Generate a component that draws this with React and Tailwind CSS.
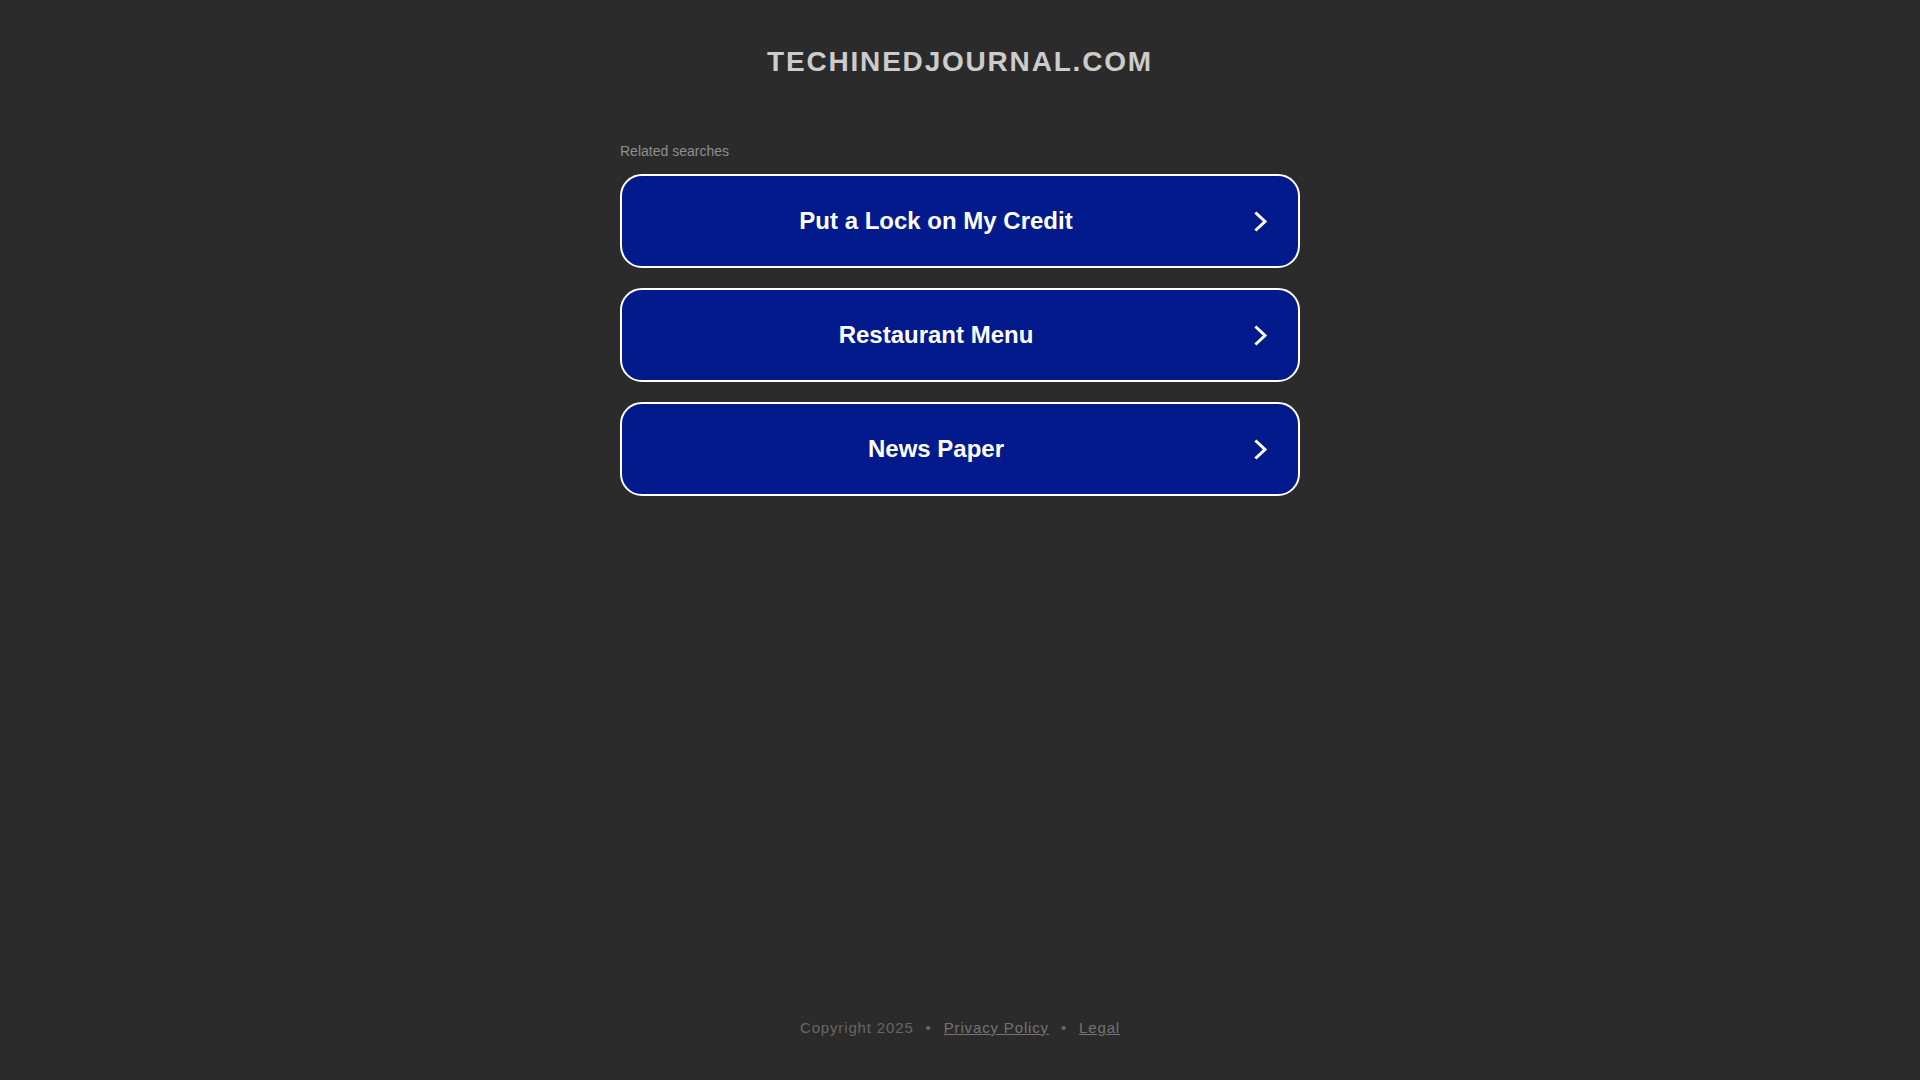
import React from 'react';

const searches = ['Put a Lock on My Credit', 'Restaurant Menu', 'News Paper'];

const Chevron = () => (
  <svg width="24" height="24" viewBox="0 0 24 24" fill="none" className="shrink-0">
    <path d="M7.5 4.5 L16 12.5 L7.5 20.5" stroke="#ffffff" strokeWidth="3" strokeLinecap="square" strokeLinejoin="miter" />
  </svg>
);

const App = () => {
  return (
    <div className="min-h-screen flex flex-col bg-[#2b2b2b] font-['Liberation_Sans',Arial,sans-serif]">
      <h1 className="pt-[45px] text-center text-[28px] leading-[34px] font-bold tracking-[1.8px] text-[#cccccc]">
        TECHINEDJOURNAL.COM
      </h1>

      <div className="w-[680px] mx-auto mt-[64px]">
        <div className="text-[14px] leading-[16px] text-[#8f8f8f]">Related searches</div>
        <div className="mt-[15px] flex flex-col gap-[20px]">
          {searches.map((item) => (
            <a
              key={item}
              href="#"
              className="h-[94px] flex items-center pl-[24px] pr-[25px] rounded-[22px] border-2 border-white bg-[#021a8b] text-white"
            >
              <span className="flex-1 text-center text-[24px] leading-[28px] font-bold">{item}</span>
              <span className="w-[23px]" />
              <Chevron />
            </a>
          ))}
        </div>
      </div>

      <footer className="mt-auto pb-[42px] flex justify-center items-center text-[15px] leading-[20px] tracking-[0.85px] text-[#666666]">
        <span>Copyright 2025</span>
        <span className="mx-[12px]">•</span>
        <a href="#" className="underline text-[#737373]">Privacy Policy</a>
        <span className="mx-[12px]">•</span>
        <a href="#" className="underline text-[#737373]">Legal</a>
      </footer>
    </div>
  );
};

export default App;
